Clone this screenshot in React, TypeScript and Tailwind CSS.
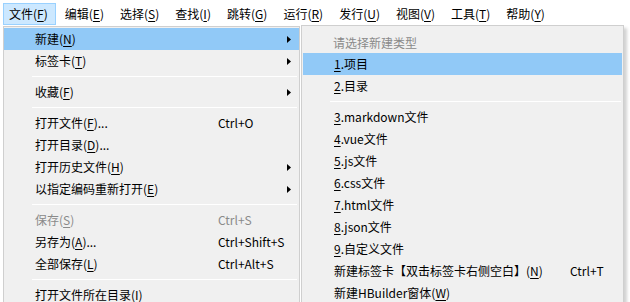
import React from "react";

type Item =
	| { sep: true }
	| {
			sep?: false;
			label: string;
			key?: string;
			tail?: string;
			shortcut?: string;
			arrow?: boolean;
			disabled?: boolean;
			active?: boolean;
	  };

const topMenus = [
	["文件", "F"],
	["编辑", "E"],
	["选择", "S"],
	["查找", "I"],
	["跳转", "G"],
	["运行", "R"],
	["发行", "U"],
	["视图", "V"],
	["工具", "T"],
	["帮助", "Y"],
];

const fileMenu: Item[] = [
	{ label: "新建", key: "N", arrow: true, active: true },
	{ label: "标签卡", key: "T", arrow: true },
	{ sep: true },
	{ label: "收藏", key: "F", arrow: true },
	{ sep: true },
	{ label: "打开文件", key: "F", tail: "...", shortcut: "Ctrl+O" },
	{ label: "打开目录", key: "D", tail: "..." },
	{ label: "打开历史文件", key: "H", arrow: true },
	{ label: "以指定编码重新打开", key: "E", arrow: true },
	{ sep: true },
	{ label: "保存", key: "S", shortcut: "Ctrl+S", disabled: true },
	{ label: "另存为", key: "A", tail: "...", shortcut: "Ctrl+Shift+S" },
	{ label: "全部保存", key: "L", shortcut: "Ctrl+Alt+S" },
	{ sep: true },
	{ label: "打开文件所在目录", key: "I" },
];

const font = { fontFamily: '"Noto Sans CJK SC", "Noto Sans", sans-serif' };

function Arrow() {
	return (
		<svg width="4" height="7" viewBox="0 0 4 7" className="block">
			<path d="M0 0 L4 3.5 L0 7 Z" fill="#000" />
		</svg>
	);
}

function Label({ label, mk, tail }: { label: string; mk?: string; tail?: string }) {
	return (
		<span>
			{label}
			{mk && (
				<>
					(<span className="underline underline-offset-2">{mk}</span>)
				</>
			)}
			{tail}
		</span>
	);
}

function FileMenu() {
	return (
		<div className="absolute left-[3px] top-0 w-[297px] bg-[#f0f0f0] border border-[#cfcfcf] py-px">
			{fileMenu.map((it, i) =>
				it.sep ? (
					<div key={i} className="h-[9px] flex items-center pl-[28px] pr-[2px]">
						<div className="h-px w-full bg-[#d7d7d7] border-b border-white" />
					</div>
				) : (
					<div
						key={i}
						className={`h-[22px] flex items-center pl-[31px] pr-[8px] ${
							it.active ? "bg-[#91c9f7]" : ""
						} ${it.disabled ? "text-[#8a8a8a]" : "text-[#000]"}`}
					>
						<div className="w-[183px]">
							<Label label={it.label} mk={it.key} tail={it.tail} />
						</div>
						<div className="flex-1">{it.shortcut}</div>
						{it.arrow && <Arrow />}
					</div>
				)
			)}
		</div>
	);
}

const subItems: { n?: string; label: string; active?: boolean }[] = [
	{ n: "1", label: ".项目", active: true },
	{ n: "2", label: ".目录" },
];

const subItems2 = [
	["3", ".markdown文件"],
	["4", ".vue文件"],
	["5", ".js文件"],
	["6", ".css文件"],
	["7", ".html文件"],
	["8", ".json文件"],
	["9", ".自定义文件"],
];

function NewMenu() {
	return (
		<div className="absolute left-[301px] top-[-1px] w-[323px] bg-[#f0f0f0] border border-[#cfcfcf] pt-[6px] pb-[4px] shadow-[3px_3px_3px_rgba(0,0,0,0.18)]">
			<div className="h-[21px] flex items-center pl-[31px] text-[#8a8a8a]">请选择新建类型</div>
			{subItems.map((it, i) => (
				<div
					key={i}
					className={`h-[22px] flex items-center pl-[31px] mx-px ${it.active ? "bg-[#91c9f7]" : ""}`}
				>
					<span className="underline underline-offset-2">{it.n}</span>
					{it.label}
				</div>
			))}
			<div className="h-[9px] flex items-center pl-[28px] pr-[2px]">
				<div className="h-px w-full bg-[#d7d7d7] border-b border-white" />
			</div>
			{subItems2.map(([n, l]) => (
				<div key={n} className="h-[22px] flex items-center pl-[32px]">
					<span className="underline underline-offset-2">{n}</span>
					{l}
				</div>
			))}
			<div className="h-[22px] flex items-center pl-[32px]">
				<div className="w-[236px]">
					<Label label="新建标签卡【双击标签卡右侧空白】" mk="N" />
				</div>
				<div>Ctrl+T</div>
			</div>
			<div className="h-[22px] flex items-center pl-[32px]">
				<Label label="新建HBuilder窗体" mk="W" />
			</div>
		</div>
	);
}

export default function App() {
	return (
		<div className="w-[630px] h-[302px] bg-white overflow-hidden text-[12px] leading-none text-black" style={font}>
			<div className="h-[26px] flex items-center pl-[3px] pt-[2px]">
				{topMenus.map(([l, k], i) => (
					<div
						key={l}
						className={`h-[22px] flex items-center pl-[5px] pr-[7px] mr-[4px] ${
							i === 0 ? "bg-[#cce8ff] border border-[#99d1ff] pl-[4px] pr-[4px]" : ""
						}`}
					>
						<Label label={l} mk={k} />
					</div>
				))}
			</div>
			<div className="relative">
				<FileMenu />
				<NewMenu />
			</div>
		</div>
	);
}
